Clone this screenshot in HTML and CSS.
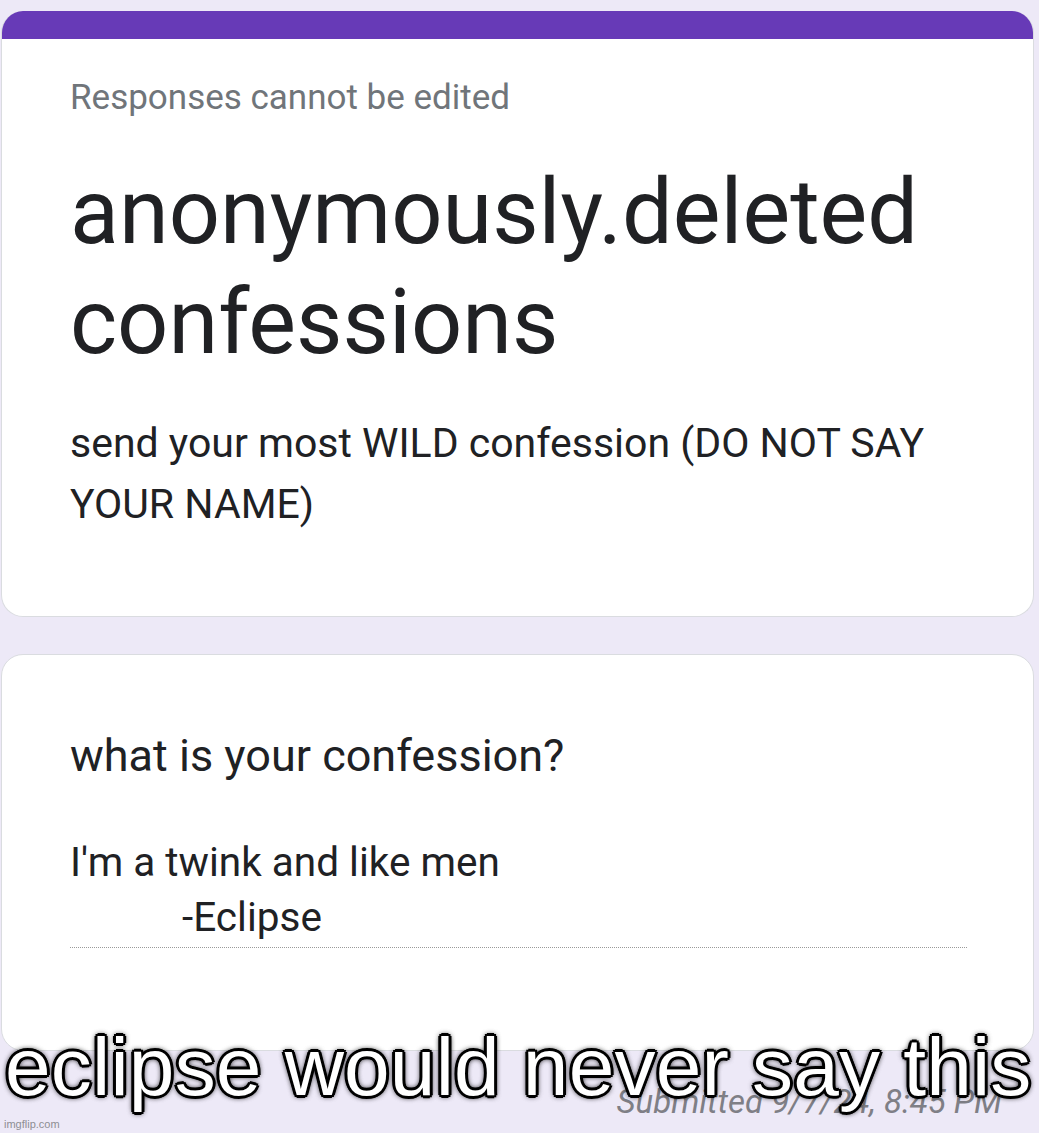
FILE: index.html
```html
<!DOCTYPE html>
<html lang="en">
<head>
<meta charset="utf-8">
<title>anonymously.deleted confessions</title>
<link rel="stylesheet" href="styles.css">
</head>
<body>
<main class="page">
  <section class="card header-card">
    <div class="accent"></div>
    <div class="card-body header-body">
      <p class="note">Responses cannot be edited</p>
      <h1 class="title">anonymously.deleted confessions</h1>
      <p class="desc">send your most WILD confession (DO NOT SAY YOUR NAME)</p>
    </div>
  </section>
  <section class="card question-card">
    <div class="card-body question-body">
      <p class="question">what is your confession?</p>
      <div class="answer">
        <span class="answer-line">I'm a twink and like men</span>
        <span class="answer-line indent">-Eclipse</span>
      </div>
    </div>
  </section>
  <p class="submitted">Submitted 9/7/24, 8:45 PM</p>
</main>
<div class="caption">eclipse would never say this</div>
<div class="watermark">imgflip.com</div>
</body>
</html>
```
FILE: styles.css
```css
html, body {
  margin: 0;
  padding: 0;
}
body {
  background: #ede9f7;
  font-family: Roboto, "Noto Sans", Arial, sans-serif;
  color: #202124;
  width: 1039px;
  height: 1133px;
  overflow: hidden;
  position: relative;
}
.page {
  display: flex;
  flex-direction: column;
  gap: 37px;
  padding: 11px 5px 0 1px;
}
.card {
  background: #ffffff;
  border: 1px solid #dadce0;
  border-radius: 22px;
  overflow: hidden;
  box-sizing: border-box;
}
.header-card {
  border-top: none;
}
.accent {
  height: 28px;
  background: #673ab7;
}
.card-body {
  padding-left: 68px;
  padding-right: 66px;
}
.header-body {
  padding-top: 39px;
  padding-bottom: 81px;
}
.note {
  margin: 0;
  font-size: 35px;
  line-height: 40px;
  color: #70757a;
}
.title {
  margin: 40px 0 0;
  font-weight: 400;
  font-size: 90px;
  line-height: 110px;
  color: #202124;
}
.desc {
  margin: 35px 0 0;
  font-size: 41px;
  line-height: 61px;
  color: #202124;
}
.question-body {
  padding-top: 75px;
  padding-bottom: 102px;
}
.question {
  margin: 0;
  font-size: 45px;
  line-height: 52px;
}
.answer {
  margin-top: 53px;
  padding-bottom: 2px;
  font-size: 40.5px;
  line-height: 55px;
  border-bottom: 1px dotted #9a9a9a;
  display: flex;
  flex-direction: column;
}
.answer-line {
  display: block;
}
.indent {
  padding-left: 112px;
}
.submitted {
  margin: -6px 0 0;
  padding-right: 32px;
  text-align: right;
  font-size: 33px;
  line-height: 40px;
  font-style: italic;
  color: #7f7f86;
}
.caption {
  position: absolute;
  left: 5px;
  top: 1026px;
  font-family: "Liberation Sans", Arial, sans-serif;
  font-size: 82px;
  line-height: 82px;
  color: #ffffff;
  white-space: nowrap;
  letter-spacing: 0.2px;
  text-shadow:
    3px 0 0 #000, -3px 0 0 #000, 0 3px 0 #000, 0 -3px 0 #000,
    2px 2px 0 #000, -2px 2px 0 #000, 2px -2px 0 #000, -2px -2px 0 #000,
    0 0 6px #000, 0 0 6px #000;
}
.watermark {
  position: absolute;
  left: 4px;
  bottom: 3px;
  font-family: "Liberation Sans", Arial, sans-serif;
  font-size: 11px;
  line-height: 12px;
  color: #8e8e93;
}
```
